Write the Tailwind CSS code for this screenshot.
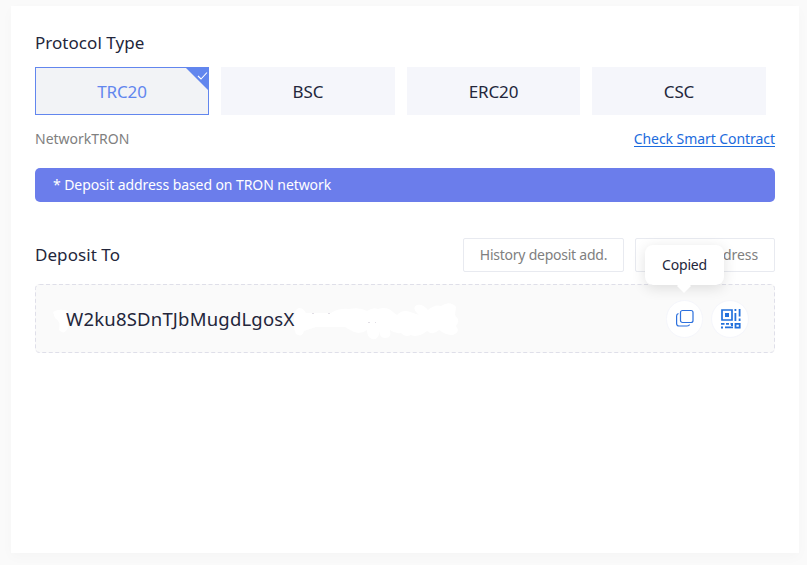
<!DOCTYPE html>
<html lang="en">
<head>
<meta charset="utf-8">
<title>Deposit</title>
<script src="https://cdn.jsdelivr.net/npm/@tailwindcss/browser@4"></script>
</head>
<body class="h-[565px] overflow-hidden bg-[#fafafa] pl-[11px] pr-2 pt-1.5 font-['Noto_Sans','Open_Sans',sans-serif] text-[#23263b]">
<main class="h-[547px] bg-white px-6 pt-[25px] shadow-[0_4px_12px_rgba(0,0,0,0.025)]">
  <h2 class="h-6 text-[17px] leading-6 tracking-[0.04px]"><span>Protocol Type</span></h2>
  <div class="mt-3 grid h-12 w-[732px] grid-cols-[174px_174px_173px_174px] gap-x-3 text-[17px] tracking-[-0.1px]">
    <button class="relative border border-[#6286ee] bg-[#f2f3f6] pt-0.5 text-[#6286ee]"><span>TRC20</span>
      <svg class="absolute -right-px -top-px" width="24" height="24" viewBox="0 0 24 24"><path d="M0 0H24V24Z" fill="#6286ee"/><path d="M13 9L16 12L22 5.5" fill="none" stroke="#fff" stroke-width="1.1"/></svg>
    </button>
    <button class="bg-[#f5f6fb] pt-0.5"><span>BSC</span></button>
    <button class="bg-[#f5f6fb] pt-0.5"><span>ERC20</span></button>
    <button class="bg-[#f5f6fb] pt-0.5"><span>CSC</span></button>
  </div>
  <div class="mt-3 flex h-6 w-[740px] items-center justify-between text-[14px]">
    <span class="pb-0.5 text-[#808080]">NetworkTRON</span>
    <a class="h-[16px] border-b border-[#1c6bdd] leading-4 tracking-[-0.06px] text-[#1c6bdd]">Check Smart Contract</a>
  </div>
  <div class="mt-[17px] flex h-[34px] w-[740px] items-center rounded-[5px] bg-[#6b7deb] pb-0.5 pl-[18px] text-[14px] tracking-[-0.08px] text-white"><span>* Deposit address based on TRON network</span></div>
  <div class="mt-9 flex h-[34px] w-[740px] items-center">
    <h2 class="text-[17px] tracking-[0.06px]"><span>Deposit To</span></h2>
    <button class="ml-auto h-[34px] w-[161px] rounded-xs border border-[#e8eaf0] pb-0.5 text-[14px] tracking-[-0.24px] text-[#808080]"><span>History deposit add.</span></button>
    <button class="ml-[11px] h-[34px] w-[140px] rounded-xs border border-[#e8eaf0] pb-0.5 pr-4 text-right text-[14px] tracking-[-0.1px] text-[#808080]"><span>address</span></button>
  </div>
  <div class="relative mt-3 flex h-[69px] w-[740px] items-center rounded bg-[#fafafa] pr-[26px]">
    <svg class="absolute inset-0" width="740" height="69" viewBox="0 0 740 69" fill="none">
      <rect x=".5" y=".5" width="739" height="68" rx="4" stroke="#dfdfe9" stroke-dasharray="4 2.5"/>
      <path d="M18 28Q24 24 33 27V43Q30 52 24 46Q26 37 20 34Z" fill="#fff"/>
      <path d="M260 28Q263 21 269 26L271 29H296Q304 24 314 25Q325 23 332 27Q338 23 343 25Q352 22 358 28L362 31Q368 24 378 29L384 31Q376 24 382 21Q388 20 393 26Q400 20 406 22Q415 16 421 23L420 31Q426 37 421 42Q426 48 418 51Q410 51 404 46Q398 52 392 47Q383 54 376 51Q370 54 366 49Q360 50 355 46Q357 55 349 54Q344 53 345 47Q343 57 337 55Q332 53 332 46Q324 52 315 46L310 43H281L269 47Q267 54 261 50Q257 42 260 28Z" fill="#fff"/>
      <path d="M277 29.5H279M293 29.5H295M333 38.5H335M340 38.5H341" stroke="#e1dee5"/>
    </svg>
    <span class="relative ml-[31px] pt-px text-[18.5px] tracking-[0.2px]">W2ku8SDnTJbMugdLgosX</span>
    <button class="relative ml-auto flex h-[38px] w-[37px] items-center justify-center rounded-full border border-[#f5f6fb] bg-white pb-0.5">
      <svg width="18" height="18" viewBox="0 0 18 18" fill="none" stroke="#2c70dd" stroke-width="1.2"><rect x="4.5" y="1.5" width="12.5" height="12" rx="2"/><path d="M2.5 4.5Q.6 5 .6 7V14.5Q.6 17 3 17H11Q13.3 17 13.5 15.5"/></svg>
    </button>
    <button class="relative ml-2 flex h-[38px] w-[38px] items-center justify-center rounded-full border border-[#f5f6fb] bg-white pl-0.5">
      <svg width="20" height="20" viewBox="0 0 20 20" fill="none" stroke="#2371dc" stroke-width="1.7"><path d="M1 1H11V11H1Z"/><path fill="#2371dc" stroke="none" d="M4 4H8V8H4ZM13.5 0H15.3V2H13.5ZM13.5 4H15.3V12H13.5ZM17.7 0H19.5V7.5H17.7ZM17.7 9.5H19.5V12H17.7ZM0 14H3.5V15.7H0ZM5 14H8V15.7H5ZM9.5 14H12V17H10V15.7H9.5ZM0 17.5H2V19.5H0ZM4 17.5H12V19.3H4Z"/><path d="M14.5 14.8H18.7V18.6H14.5Z" stroke-width="1.8"/></svg>
    </button>
    <div class="absolute -top-[39px] left-[610px] flex h-10 w-[79px] items-center justify-center rounded-lg bg-white pb-0.5 text-[14px] tracking-[-0.2px] shadow-[0_3px_14px_rgba(0,0,0,0.12)]"><span>Copied</span>
      <svg class="absolute left-8 top-[39px]" width="14" height="9" viewBox="0 0 14 9"><path d="M0 2L2 0H12L14 2L7 9Z" fill="#fff"/></svg>
    </div>
  </div>
</main>
</body>
</html>
